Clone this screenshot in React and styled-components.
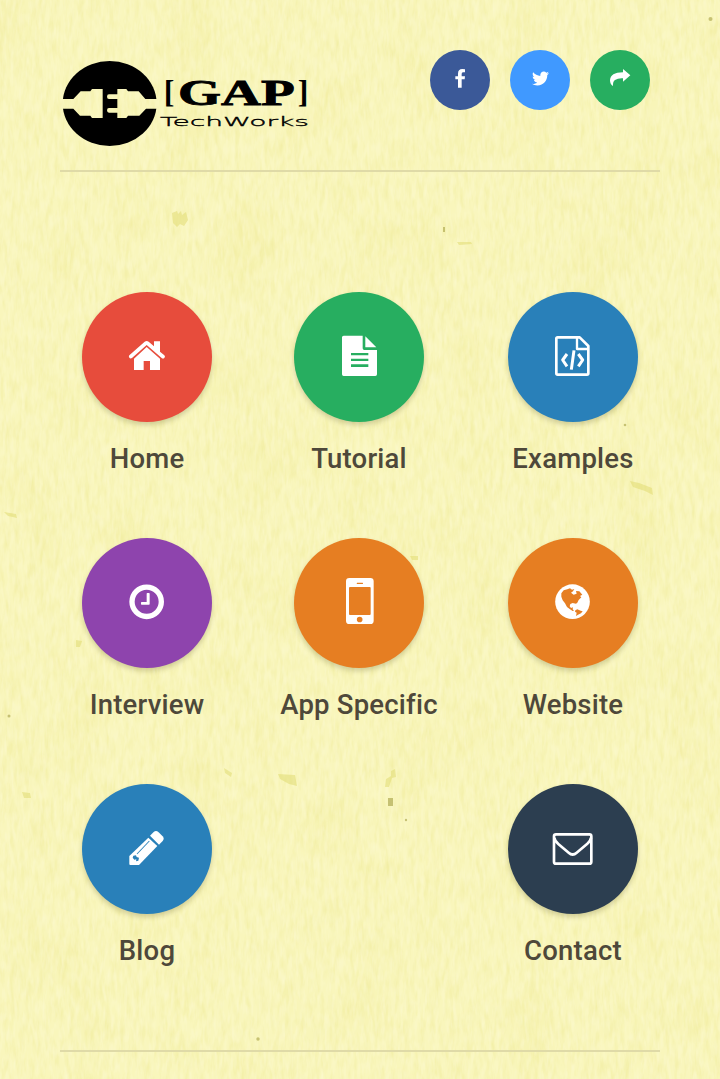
import React from 'react';
import styled, { createGlobalStyle } from 'styled-components';
import { FaTwitter } from 'react-icons/fa';

const GlobalStyle = createGlobalStyle`
  *, *::before, *::after { box-sizing: border-box; }
  html, body { margin: 0; padding: 0; background: #f8f5b9; overflow: hidden; }
  body { font-family: Roboto, "Liberation Sans", sans-serif; }
`;

const Page = styled.div`
  position: relative;
  isolation: isolate;
  width: 720px;
  height: 1079px;
  padding: 0 60px;
  overflow: hidden;
`;

const Paper = styled.svg`
  position: absolute;
  inset: 0;
  z-index: -1;
  width: 100%;
  height: 100%;
`;

const Header = styled.header`
  display: flex;
  justify-content: space-between;
  align-items: flex-start;
  height: 172px;
  padding: 50px 10px 0 0;
  border-bottom: 2px solid #dfdaa7;
`;

const Logo = styled.svg`
  display: block;
  width: 250px;
  height: 90px;
  margin-top: 10px;
`;

const SocialList = styled.nav`
  display: flex;
  gap: 20px;
`;

const SocialLink = styled.a`
  display: flex;
  align-items: center;
  justify-content: center;
  width: 60px;
  height: 60px;
  border-radius: 50%;
  background: ${(p) => p.$color};
  color: #fff;
`;

const SocialGlyph = styled.svg`
  width: 60px;
  height: 60px;
  fill: #fff;
`;

const Bird = styled(FaTwitter)`
  width: 17px;
  height: 17px;
  margin-top: -3px;
`;

const Menu = styled.main`
  display: grid;
  grid-template-columns: 214px 210px 218px;
  grid-auto-rows: 246px;
  height: 758px;
  margin: 120px -22px 0 -20px;
`;

const Tile = styled.a`
  display: flex;
  flex-direction: column;
  align-items: center;
  grid-column: ${(p) => p.$column || 'auto'};
  color: #4e483a;
  text-decoration: none;
`;

const Disc = styled.span`
  display: block;
  width: 130px;
  height: 130px;
  border-radius: 50%;
  background: ${(p) => p.$color};
  box-shadow: 0 3px 5px rgba(70, 65, 20, 0.22);
`;

const Glyph = styled.svg`
  display: block;
  width: 130px;
  height: 130px;
  fill: #fff;
`;

const Label = styled.span`
  margin-top: 20px;
  font-size: 27.5px;
  font-weight: 500;
  line-height: 33px;
  letter-spacing: 0.22px;
  white-space: nowrap;
`;

const Footer = styled.footer`
  height: 29px;
  border-top: 2px solid #dfdaa7;
`;

const specks = [
  'M172 213l5-2 1 3 3-3 1 4 4-3 2 8-4 6-4-2-3 3-4-4z',
  'M278 774l17 1 2 11-8-2-9-5z',
  'M391 771l4-2 1 8-4 1-3 9-4 0 1-8 5-3z',
  'M457 242l14 0 1 2-13 1z',
  'M630 481l9 2 13 5 1 7-8-4-12-4z',
  'M22 792l8 1 1 5-7 0z',
  'M76 640l6 1-2 6-4 0z',
  'M4 512l12 2 1 4-9-2z',
  'M410 556l8 0 0 4-6 0z',
  'M224 768l8 5-1 4-6-4z',
];

function PaperTexture() {
  return (
    <Paper viewBox="0 0 720 1079" aria-hidden="true">
      <defs>
        <filter id="shade" x="0" y="0" width="100%" height="100%" colorInterpolationFilters="sRGB">
          <feTurbulence type="fractalNoise" baseFrequency="0.2 0.05" numOctaves="3" seed="7" />
          <feColorMatrix values="0 0 0 0 0.92  0 0 0 0 0.9  0 0 0 0 0.55  0.8 0 0 0 -0.32" />
        </filter>
        <filter id="fibre" x="0" y="0" width="100%" height="100%" colorInterpolationFilters="sRGB">
          <feTurbulence type="fractalNoise" baseFrequency="0.28 0.07" numOctaves="2" seed="19" />
          <feColorMatrix values="0 0 0 0 0.99  0 0 0 0 0.98  0 0 0 0 0.84  0 1 0 0 -0.4" />
        </filter>
        <filter id="patches" x="0" y="0" width="100%" height="100%" colorInterpolationFilters="sRGB">
          <feTurbulence type="fractalNoise" baseFrequency="0.018 0.014" numOctaves="2" seed="4" />
          <feColorMatrix values="0 0 0 0 0.95  0 0 0 0 0.93  0 0 0 0 0.62  1.1 0 0 0 -0.54" />
        </filter>
      </defs>
      <rect width="720" height="1079" fill="#f9f6bc" />
      <rect width="720" height="1079" filter="url(#patches)" />
      <rect width="720" height="1079" filter="url(#shade)" />
      <rect width="720" height="1079" filter="url(#fibre)" />
      <g fill="#dfda6c" opacity="0.5">
        {specks.map((d) => <path key={d} d={d} />)}
      </g>
      <g fill="#b5b05a" opacity="0.75">
        <path d="M388 798h5v8h-5z" />
        <path d="M443 227h2v5h-2z" />
        <circle cx="710.500" cy="19" r="2" />
        <circle cx="625" cy="425" r="1.300" />
        <circle cx="9" cy="716" r="1.500" />
        <circle cx="258" cy="1039" r="1.700" />
        <circle cx="406" cy="820" r="1.200" />
      </g>
    </Paper>
  );
}

function Brand() {
  return (
    <Logo viewBox="30 30 750 270" role="img" aria-label="GAP TechWorks">
      <mask id="plugs" maskUnits="userSpaceOnUse" x="30" y="30" width="300" height="270">
        <rect x="30" y="30" width="300" height="270" fill="#fff" />
        <path d="M30 147H70L92 124H121L126 117H158V204H126L121 197H90L70 176H30Z" />
        <path d="M202 117H229L234 124H266L286 147H330V176H288L268 197H234L229 204H202V188H177Q171 188 171 181Q171 174 177 174H202V147H177Q171 147 171 140Q171 133 177 133H202Z" />
      </mask>
      <ellipse cx="179" cy="160.500" rx="141" ry="127.500" mask="url(#plugs)" />
      <text x="384" y="164" fontFamily='"Liberation Serif", serif' fontWeight="700" fontSize="108" textLength="350" lengthAdjust="spacingAndGlyphs" stroke="#000" strokeWidth="2.500">GAP</text>
      <g fontFamily='"Liberation Serif", serif' fontWeight="700" fontSize="94">
        <text x="341" y="155" textLength="32" lengthAdjust="spacingAndGlyphs">[</text>
        <text x="743" y="155" textLength="32" lengthAdjust="spacingAndGlyphs">]</text>
      </g>
      <text x="330" y="229" fontFamily='"DejaVu Sans", sans-serif' fontWeight="200" fontSize="37" textLength="447" lengthAdjust="spacingAndGlyphs" stroke="#000" strokeWidth="1">TechWorks</text>
    </Logo>
  );
}

/* Glyphs are drawn on a grid of three units per pixel inside a 130px disc. */
const glyphs = {
  home: (
    <Glyph viewBox="36 36 390 390">
      <path d="M178 226L224 185Q230 181 236 185L252 199V184H270V215L283 226Q287 230 283 234Q279 237 275 234L230 195L186 234Q181 237 178 233Q175 229 178 226Z" />
      <path d="M230 201L270 236V270H240V243H221V270H192V236Z" />
    </Glyph>
  ),
  document: (
    <Glyph viewBox="672 36 390 390">
      <path fillRule="evenodd" d="M821 167H878V205Q878 210 883 210H921V283Q921 288 916 288H821Q816 288 816 283V172Q816 167 821 167ZM843 219V226H895V219ZM843 236V243H895V236ZM843 253V261H895V253Z" />
      <path d="M886 169L919 202H886Z" />
    </Glyph>
  ),
  code: (
    <Glyph viewBox="54 36 390 390">
      <g fill="none" stroke="#fff" strokeWidth="8" strokeLinejoin="round">
        <path d="M203 172H269L295 198V280Q295 284 291 284H203Q199 284 199 280V176Q199 172 203 172Z" />
        <path d="M261 172V207H295" strokeWidth="7" />
        <path d="M231 222L218 240L231 259M265 222L278 240L265 259M252 211L244 269" strokeWidth="9" />
      </g>
    </Glyph>
  ),
  clock: (
    <Glyph viewBox="36 24 390 390">
      <circle cx="230" cy="215.500" r="44" fill="none" stroke="#fff" strokeWidth="16" />
      <path d="M230 191Q230 189 232 189H237Q239 189 239 191V222Q239 224 237 224H215Q213 224 213 222V218Q213 216 215 216H230Z" />
    </Glyph>
  ),
  phone: (
    <Glyph viewBox="672 24 390 390">
      <path fillRule="evenodd" d="M838 144H901Q911 144 911 154V272Q911 282 901 282H838Q828 282 828 272V154Q828 144 838 144ZM837 174V252Q837 255 840 255H899Q902 255 902 252V174Q902 171 899 171H840Q837 171 837 174ZM861 158Q859 160 861 162H878Q881 160 878 158ZM869 260A8.500 8.500 0 1 0 869 277A8.500 8.500 0 1 0 869 260Z" />
    </Glyph>
  ),
  globe: (
    <Glyph viewBox="54 24 390 390">
      <circle cx="247.500" cy="215" r="52" />
      <g fill="#e67e22">
        <path d="M214 190L221 181L232 178L240 175L246 179L253 177L249 184L243 188L251 194L260 191L258 183L268 184L277 194L270 198L274 202L266 210L262 218L258 221L248 219L241 222L239 229L243 234L249 232L248 238L252 242L248 243L240 238L231 231L225 220L218 211L214 200Z" />
        <path d="M256 241L262 238L272 242L278 244L273 250L264 254L258 258L260 248L255 245Z" />
      </g>
    </Glyph>
  ),
  pencil: (
    <Glyph viewBox="36 42 390 390">
      <path d="M235 203L262 228L207 285H181Q178 285 178 282V258Z" />
      <path d="M240 197L251 186Q258 180 265 186L278 199Q284 206 278 213L267 224Z" />
      <path d="M200 251L237 212L239 214L202 253Z" fill="#2980b9" />
      <path d="M190 257L198 256L200 261L207 263L205 272L198 274L199 268L193 269L188 263Z" fill="#2980b9" />
    </Glyph>
  ),
  mail: (
    <Glyph viewBox="54 42 390 390">
      <g fill="none" stroke="#fff" strokeWidth="8" strokeLinejoin="round">
        <rect x="192" y="193" width="112" height="88" rx="6" />
        <path d="M193 203Q195 214 204 221L236 248Q248 259 260 248L292 221Q302 213 303 203" />
      </g>
    </Glyph>
  ),
};

const items = [
  { label: 'Home', icon: 'home', color: '#e74c3c' },
  { label: 'Tutorial', icon: 'document', color: '#27ae60' },
  { label: 'Examples', icon: 'code', color: '#2980b9' },
  { label: 'Interview', icon: 'clock', color: '#8e44ad' },
  { label: 'App Specific', icon: 'phone', color: '#e67e22' },
  { label: 'Website', icon: 'globe', color: '#e67e22' },
  { label: 'Blog', icon: 'pencil', color: '#2980b9' },
  { label: 'Contact', icon: 'mail', color: '#2c3e50', column: 3 },
];

export default function App() {
  return (
    <>
      <GlobalStyle />
      <Page>
        <PaperTexture />
        <Header>
          <Brand />
          <SocialList>
            <SocialLink $color="#3b5998" aria-label="Facebook">
              <SocialGlyph viewBox="30 30 180 180">
                <path d="M135 88V97H129Q125 97 125 102V109H135L134 118H125V143H114V118H106V109H114V101Q114 87 127 87Q132 87 135 88Z" />
              </SocialGlyph>
            </SocialLink>
            <SocialLink $color="#4099ff" aria-label="Twitter"><Bird /></SocialLink>
            <SocialLink $color="#27ae60" aria-label="Share">
              <SocialGlyph viewBox="510 30 180 180">
                <path d="M609 87L631 106L609 125V115Q594 114 585 120Q578 125 579 138Q570 133 570 121Q571 97 609 97Z" />
              </SocialGlyph>
            </SocialLink>
          </SocialList>
        </Header>
        <Menu>
          {items.map(({ label, icon, color, column }) => (
            <Tile key={label} $column={column}>
              <Disc $color={color}>{glyphs[icon]}</Disc>
              <Label>{label}</Label>
            </Tile>
          ))}
        </Menu>
        <Footer />
      </Page>
    </>
  );
}
